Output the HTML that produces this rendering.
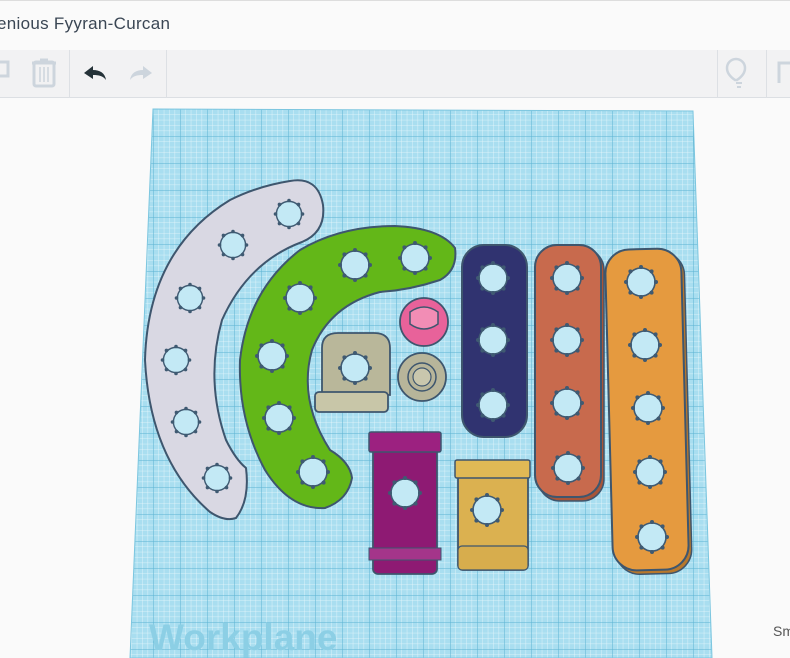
<!DOCTYPE html>
<html><head><meta charset="utf-8"><style>
html,body{margin:0;padding:0;width:790px;height:658px;overflow:hidden;background:#fafafa;font-family:"Liberation Sans",sans-serif}
#title{position:absolute;left:0;top:0;width:790px;height:49px;background:#fafafa;border-top:1px solid #ddd;border-bottom:1px solid #d8dce1}
#title span{position:absolute;left:-3px;top:13px;font-size:17px;color:#3a4654;font-family:"Liberation Sans",sans-serif;letter-spacing:0.3px}
#tb{position:absolute;left:0;top:50px;width:790px;height:47px;background:#f2f2f3;border-bottom:1px solid #dcdfe3}
.sep{position:absolute;top:50px;width:1px;height:48px;background:#dde0e4}
svg{position:absolute;left:0;top:0}
#sm{position:absolute;left:773px;top:623px;font-size:14px;color:#555}
</style></head><body>
<div id="title"><span>enious Fyyran-Curcan</span></div>
<div id="tb"></div>
<div class="sep" style="left:69px"></div><div class="sep" style="left:166px"></div>
<div class="sep" style="left:717px"></div><div class="sep" style="left:766px"></div>
<svg width="790" height="658" viewBox="0 0 790 658">
<defs>
<pattern id="minor" width="5.4" height="5.4" patternUnits="userSpaceOnUse" x="153" y="109">
<path d="M0 0H5.4M0 0V5.4" stroke="#e9f7fc" stroke-width="0.8" fill="none"/></pattern>
<pattern id="major" width="27" height="27" patternUnits="userSpaceOnUse" x="153" y="109">
<path d="M0 0H27M0 0V27" stroke="#5ab3d2" stroke-width="1" fill="none"/></pattern>
<g id="h"><circle r="14" fill="#c3e9f5" stroke="#3f5a72" stroke-width="1.6"/>
<g fill="#3f5a72"><circle cx="0" cy="-15" r="2"/><circle cx="10.6" cy="-10.6" r="2"/><circle cx="15" cy="0" r="2"/><circle cx="10.6" cy="10.6" r="2"/><circle cx="0" cy="15" r="2"/><circle cx="-10.6" cy="10.6" r="2"/><circle cx="-15" cy="0" r="2"/><circle cx="-10.6" cy="-10.6" r="2"/></g></g>
</defs>
<rect x="34" y="62" width="20" height="24" rx="2" fill="none" stroke="#cdd5dd" stroke-width="3"/>
<path d="M32 63h24M40 60h8" stroke="#cdd5dd" stroke-width="3"/>
<path d="M40 67v15M44 67v15M48 67v15" stroke="#cdd5dd" stroke-width="1.5"/>
<path d="M-2 62h10v14h-10" stroke="#cdd5dd" stroke-width="3" fill="none"/>
<path d="M84 73l9-7v4c7 0 12 3 13 10c-3-4-7-5-13-5v4z" fill="#253238"/>
<path d="M152 73l-9-7v4c-7 0-12 3-13 10c3-4 7-5 13-5v4z" fill="#cdd5dd"/>
<path d="M735 80c-6-4-8-8-8-12a9 9 0 0 1 18 0c0 4-2 8-8 12z" fill="none" stroke="#cdd5dd" stroke-width="2.5"/>
<path d="M736 83h6M737 87h4" stroke="#cdd5dd" stroke-width="2"/>
<path d="M790 63h-11v20" stroke="#cdd5dd" stroke-width="3" fill="none"/>
<path d="M153 109L693 111L712 658L130 658Z" fill="#a9def0"/>
<path d="M153 109L693 111L712 658L130 658Z" fill="url(#minor)"/>
<path d="M153 109L693 111L712 658L130 658Z" fill="url(#major)"/>
<path d="M153 109L693 111L712 658L130 658Z" fill="none" stroke="#7cc6df" stroke-width="1"/>
<text x="149" y="650" font-size="37" font-weight="bold" fill="#8ccfe5" font-family="Liberation Sans,sans-serif">Workplane</text>
<path d="M290 181Q318 176 323 205Q326 232 302 242Q248 262 222 320Q205 380 226 440Q236 460 246 468Q250 500 236 518Q225 522 210 512Q150 460 145 360Q148 250 230 200Q258 186 290 181Z" fill="#d9d8e3" stroke="#3e566e" stroke-width="2"/>
<g transform="translate(289,214)"><use href="#h" transform="scale(.9)"/></g>
<g transform="translate(233,245)"><use href="#h" transform="scale(.9)"/></g>
<g transform="translate(190,298)"><use href="#h" transform="scale(.9)"/></g>
<g transform="translate(176,360)"><use href="#h" transform="scale(.9)"/></g>
<g transform="translate(186,422)"><use href="#h" transform="scale(.9)"/></g>
<g transform="translate(217,478)"><use href="#h" transform="scale(.9)"/></g>
<path d="M395 226Q440 228 455 248Q458 270 440 280Q410 290 380 292Q330 305 312 350Q298 400 330 450Q350 462 352 478Q348 500 325 508Q290 510 265 470Q238 420 240 360Q248 290 300 250Q340 226 395 226Z" fill="#63b718" stroke="#3e566e" stroke-width="2"/>
<use href="#h" x="415" y="258"/><use href="#h" x="355" y="265"/><use href="#h" x="300" y="298"/>
<use href="#h" x="272" y="356"/><use href="#h" x="279" y="418"/><use href="#h" x="313" y="472"/>
<path d="M322 395V348Q322 333 338 333H374Q390 333 390 348V395Z" fill="#b9b79a" stroke="#3e566e" stroke-width="1.8"/>
<use href="#h" x="355" y="368"/>
<rect x="315" y="392" width="73" height="20" rx="4" fill="#c8c6a8" stroke="#3e566e" stroke-width="1.8"/>
<circle cx="424" cy="322" r="24" fill="#e8629a" stroke="#3e566e" stroke-width="1.8"/>
<path d="M410 312q14-10 28 0v12q-14 10-28 0z" fill="#f28db5" stroke="#3e566e" stroke-width="1.5"/>
<circle cx="422" cy="377" r="24" fill="#b7b59a" stroke="#3e566e" stroke-width="1.8"/>
<circle cx="422" cy="377" r="14" fill="none" stroke="#3e566e" stroke-width="1.5"/>
<circle cx="422" cy="377" r="9" fill="#c9c7ad" stroke="#3e566e" stroke-width="1.2"/>
<rect x="462" y="245" width="65" height="192" rx="22" fill="#303370" stroke="#3e566e" stroke-width="2"/>
<use href="#h" x="493" y="278"/><use href="#h" x="493" y="340"/><use href="#h" x="493" y="405"/>
<rect x="538" y="248" width="66" height="253" rx="22" fill="#a85538" stroke="#3e566e" stroke-width="1.5"/>
<rect x="535" y="245" width="66" height="252" rx="22" fill="#c86a4d" stroke="#3e566e" stroke-width="2"/>
<use href="#h" x="567" y="278"/><use href="#h" x="567" y="340"/><use href="#h" x="567" y="403"/><use href="#h" x="568" y="468"/>
<g transform="rotate(-1.5 648 410)">
<rect x="612" y="252" width="76" height="322" rx="24" fill="#b8782c" stroke="#3e566e" stroke-width="1.5"/>
<rect x="609" y="249" width="76" height="321" rx="24" fill="#e59a3f" stroke="#3e566e" stroke-width="2"/>
</g>
<use href="#h" x="641" y="282"/><use href="#h" x="645" y="345"/><use href="#h" x="648" y="408"/><use href="#h" x="650" y="472"/><use href="#h" x="652" y="537"/>
<rect x="373" y="445" width="64" height="129" rx="5" fill="#8e1a73" stroke="#3e566e" stroke-width="1.8"/>
<rect x="369" y="432" width="72" height="20" rx="2" fill="#9c2180" stroke="#3e566e" stroke-width="1.5"/>
<rect x="369" y="548" width="72" height="12" fill="#a4358a" stroke="#3e566e" stroke-width="1"/>
<use href="#h" x="405" y="493"/>
<rect x="458" y="470" width="70" height="100" rx="5" fill="#dbb150" stroke="#3e566e" stroke-width="1.8"/>
<rect x="455" y="460" width="75" height="18" rx="2" fill="#e0b955" stroke="#3e566e" stroke-width="1.5"/>
<rect x="458" y="546" width="70" height="24" rx="4" fill="#d7ad4d" stroke="#3e566e" stroke-width="1.2"/>
<use href="#h" x="487" y="510"/>
</svg>
<div id="sm">Sm</div>
</body></html>
